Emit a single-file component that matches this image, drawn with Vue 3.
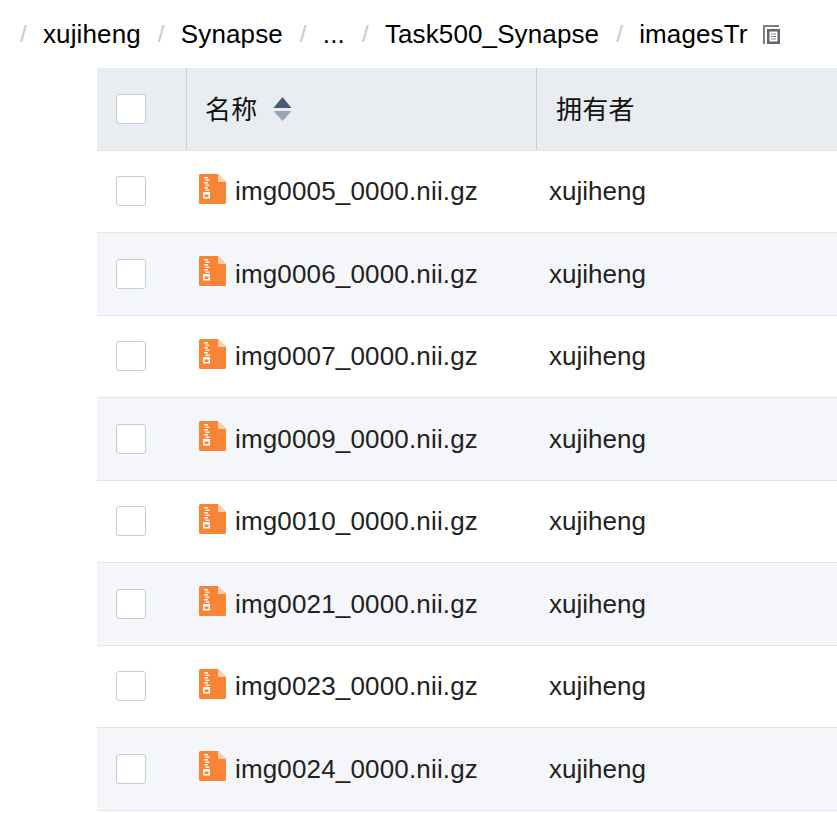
<script setup>
const crumbs = ['xujiheng', 'Synapse', '...', 'Task500_Synapse', 'imagesTr']
const files = ['img0005_0000.nii.gz', 'img0006_0000.nii.gz', 'img0007_0000.nii.gz', 'img0009_0000.nii.gz', 'img0010_0000.nii.gz', 'img0021_0000.nii.gz', 'img0023_0000.nii.gz', 'img0024_0000.nii.gz']
</script>

<template>
  <div class="page">
    <nav class="crumbs">
      <template v-for="c in crumbs" :key="c">
        <span class="sep">/</span>
        <span class="crumb">{{ c }}</span>
      </template>
      <svg class="copy" width="18" height="20" viewBox="0 0 18 20">
        <path d="M0 0h16v2H2v17H0z" fill="#7a7f87" />
        <path d="M4 4h13v15H4z" fill="#62666d" />
        <path d="M6.500 6.500h8v10h-8z" fill="#fff" />
        <path d="M8 8.500h5v1H8zM8 11h5v1H8zM8 13.500h5v1H8z" fill="#8a8e94" />
      </svg>
    </nav>
    <div class="table">
      <div class="row head">
        <div class="cell check"><span class="box"></span></div>
        <div class="cell name">
          <span class="title">名称</span>
          <span class="sort">
            <svg width="19" height="24" viewBox="0 0 19 24">
              <path d="M9.500 0l9 11H.500z" fill="#4a5a70" />
              <path d="M.500 14h18l-9 10z" fill="#97a5bb" />
            </svg>
          </span>
        </div>
        <div class="cell owner"><span class="title">拥有者</span></div>
      </div>
      <div v-for="f in files" :key="f" class="row item">
        <div class="cell check"><span class="box"></span></div>
        <div class="cell name">
          <svg class="zip" width="27" height="30" viewBox="0 0 27 30">
            <path d="M1.500 0H19l8 8v20.500a1.500 1.500 0 0 1-1.500 1.500h-24A1.500 1.500 0 0 1 0 28.500v-27A1.500 1.500 0 0 1 1.500 0z" fill="#f98436" />
            <path d="M19 0l8 8h-8z" fill="#fbd0b2" />
            <path d="M5 3h4v1.500H5zM6.500 5.500h4V7h-4zM5 8h4v1.500H5zM6.500 10.500h4V12h-4zM5 13h4v1.500H5zM6.500 15.500h4V17h-4z" fill="#fff" opacity="0.9" />
            <path fill-rule="evenodd" d="M4 18h7v6.500H4zM5.500 20.500v2.500h4v-2.500z" fill="#fff" />
          </svg>
          <span class="file">{{ f }}</span>
        </div>
        <div class="cell owner"><span class="user">xujiheng</span></div>
      </div>
    </div>
  </div>
</template>

<style scoped>
.page {
  width: 837px;
  height: 813px;
  overflow: hidden;
  background: #fff;
  font-family: "Liberation Sans", "Noto Sans CJK SC", sans-serif;
  font-size: 26px;
  color: #000;
}
.crumbs {
  height: 68px;
  display: flex;
  align-items: center;
  padding-left: 20px;
  box-sizing: border-box;
  white-space: nowrap;
}
.sep {
  color: #c0ccda;
  width: 23px;
  font-size: 24px;
}
.crumb {
  margin-right: 17px;
  letter-spacing: 0.12px;
}
.copy {
  margin-left: -2px;
  margin-top: 1px;
}
.table {
  margin-left: 97px;
  width: 760px;
}
.row {
  display: flex;
  height: 82.5px;
  box-sizing: border-box;
  border-bottom: 1px solid #e2e4e8;
}
.head {
  background: #e9ecf1;
}
.item:nth-child(odd) {
  background: #f5f6fa;
}
.cell {
  display: flex;
  align-items: center;
  box-sizing: border-box;
}
.check {
  width: 90px;
  padding-left: 19px;
}
.name {
  width: 350px;
  padding-left: 12px;
}
.owner {
  flex: 1;
  padding-left: 12px;
}
.item .name,
.item .owner {
  padding-top: 0.5px;
}
.head .name {
  padding-left: 18px;
  border-left: 1px solid #c9ced6;
}
.head .check {
  width: 89px;
}
.head .owner {
  padding-left: 19px;
  border-left: 1px solid #c9ced6;
}
.box {
  width: 30px;
  height: 30px;
  box-sizing: border-box;
  background: #fff;
  border: 1px solid #c0ccda;
  border-radius: 3px;
}
.title {
  color: #111;
  letter-spacing: 0.3px;
  margin-top: -2px;
}
.sort {
  display: flex;
  margin-left: 15px;
}
.zip {
  flex: none;
  margin-right: 9px;
  margin-top: -5.5px;
}
.file {
  color: #222;
  letter-spacing: 0.16px;
}
.user {
  color: #222;
}
</style>
